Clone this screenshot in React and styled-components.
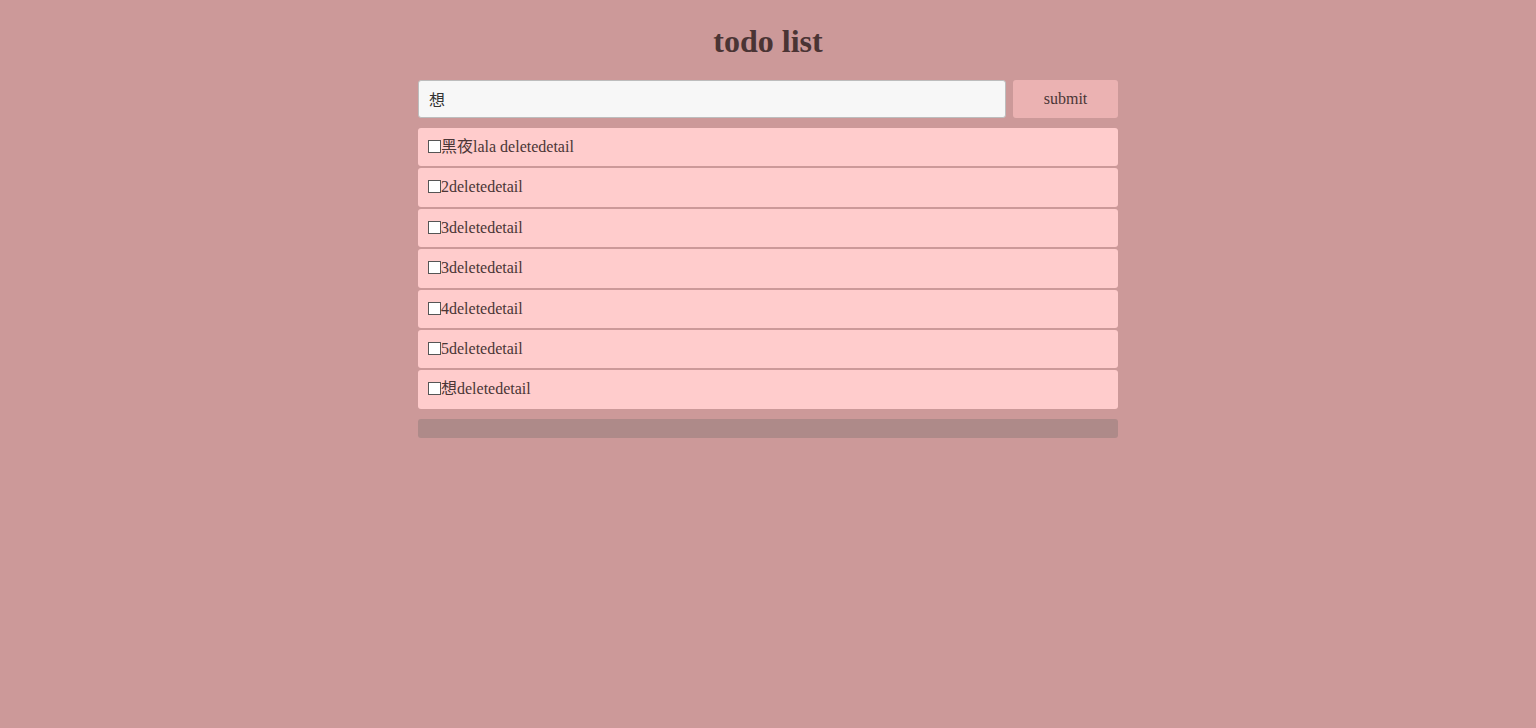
import React, { useState } from "react";
import styled, { createGlobalStyle } from "styled-components";

const Global = createGlobalStyle`
  html, body { background: #cc9999; }
  body {
    margin: 0;
    font-family: "Liberation Serif", "Noto Sans CJK SC", serif;
    color: #4a3636;
  }
`;

const Page = styled.div`
  width: 700px;
  margin: 0 auto;
  padding-top: 1px;
`;

const Title = styled.h1`
  margin: 22px 0 20px;
  font-size: 32px;
  font-weight: bold;
  text-align: center;
  color: #4a3434;
`;

const Form = styled.form`
  display: flex;
  gap: 7px;
  margin-bottom: 10px;
`;

const Input = styled.input`
  flex: 1;
  height: 38px;
  box-sizing: border-box;
  padding: 0 10px;
  border: 1px solid #bdbdbd;
  border-radius: 3px;
  background: #f7f7f7;
  font-family: "Liberation Serif", "Noto Sans CJK SC", serif;
  font-size: 16px;
  color: #333;
  outline: none;
`;

const Button = styled.button`
  width: 105px;
  height: 38px;
  border: none;
  border-radius: 3px;
  background: #ebb2b2;
  font-family: "Liberation Serif", serif;
  font-size: 16px;
  color: #4a3636;
  cursor: pointer;
`;

const List = styled.ul`
  list-style: none;
  margin: 0;
  padding: 0;
`;

const Item = styled.li`
  padding: 10px;
  margin-bottom: 2px;
  border-radius: 3px;
  background: #ffcccc;
  font-size: 16px;
  line-height: 18.4px;
  white-space: pre;
`;

const Check = styled.input`
  appearance: none;
  -webkit-appearance: none;
  margin: 0;
  width: 13px;
  height: 13px;
  box-sizing: border-box;
  border: 1px solid #555;
  background: #fff;
  vertical-align: -1px;
`;

const Plain = styled.span``;

const Footer = styled.div`
  margin-top: 10px;
  height: 19px;
  border-radius: 3px;
  background: #ae8a89;
`;

const items = ["黑夜lala ", "2", "3", "3", "4", "5", "想"];

export default function App() {
  const [value, setValue] = useState("想");
  return (
    <Page>
      <Global />
      <Title>todo list</Title>
      <Form onSubmit={(e) => e.preventDefault()}>
        <Input value={value} onChange={(e) => setValue(e.target.value)} />
        <Button type="submit">submit</Button>
      </Form>
      <List>
        {items.map((t, i) => (
          <Item key={i}>
            <Check type="checkbox" />
            <Plain>{t}</Plain>
            <Plain>delete</Plain>
            <Plain>detail</Plain>
          </Item>
        ))}
      </List>
      <Footer />
    </Page>
  );
}
